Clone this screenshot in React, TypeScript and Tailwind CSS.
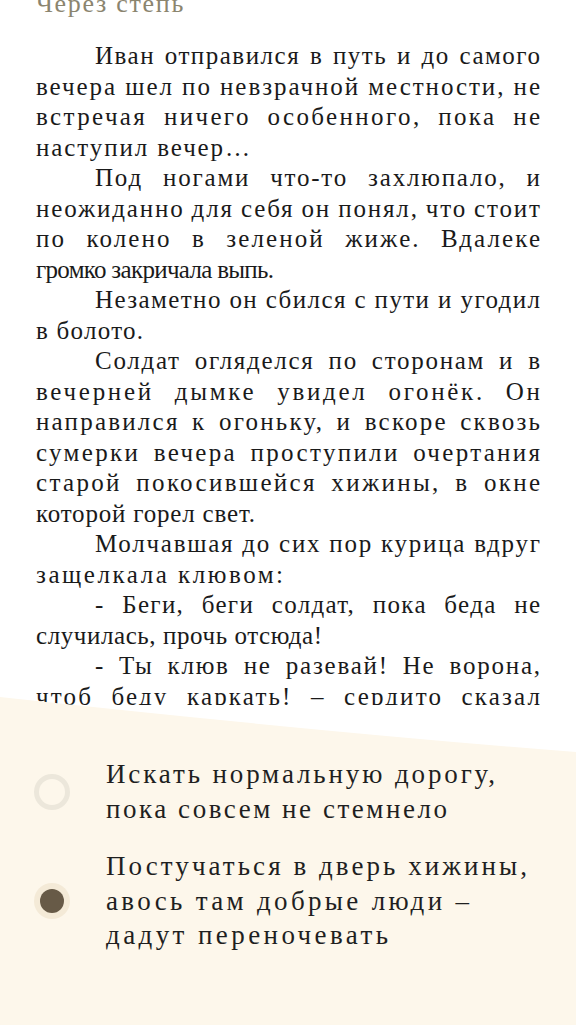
import React from 'react';

// each line of the page is laid out like the reader does it: letters and words are spread
// so the line fills its measure. w = visible width, gap = extra word spacing.
type Line = { t: string; w?: number; gap?: number };

const BODY = 25;
const CHOICE = 27;
const FULL = 504;
const INDENT = 59;

const story: Line[][] = [
  [
    { t: 'Иван отправился в путь и до самого', gap: 2 },
    { t: 'вечера шел по невзрачной местности, не', gap: 0 },
    { t: 'встречая ничего особенного, пока не', gap: 8 },
    { t: 'наступил вечер…', w: 214 },
  ],
  [
    { t: 'Под ногами что-то захлюпало, и', gap: 12 },
    { t: 'неожиданно для себя он понял, что стоит', gap: -1 },
    { t: 'по колено в зеленой жиже. Вдалеке', gap: 12 },
    { t: 'громко закричала выпь.', w: 238, gap: 0 },
  ],
  [
    { t: 'Незаметно он сбился с пути и угодил', gap: 0 },
    { t: 'в болото.', w: 107 },
  ],
  [
    { t: 'Солдат огляделся по сторонам и в', gap: 6 },
    { t: 'вечерней дымке увидел огонёк. Он', gap: 12 },
    { t: 'направился к огоньку, и вскоре сквозь', gap: 4 },
    { t: 'сумерки вечера проступили очертания', gap: 5 },
    { t: 'старой покосившейся хижины, в окне', gap: 6 },
    { t: 'которой горел свет.', w: 219 },
  ],
  [
    { t: 'Молчавшая до сих пор курица вдруг', gap: 0 },
    { t: 'защелкала клювом:', w: 247 },
  ],
  [
    { t: '- Беги, беги солдат, пока беда не', gap: 10 },
    { t: 'случилась, прочь отсюда!', w: 286 },
  ],
  [
    { t: '- Ты клюв не разевай! Не ворона,', gap: 6 },
    { t: 'чтоб беду каркать! – сердито сказал', gap: 10 },
    { t: 'солдат и постучал в дверь.', w: 300 },
  ],
];

const choices = [
  {
    id: 'road',
    selected: false,
    lines: [
      { t: 'Искать нормальную дорогу,', w: 389 },
      { t: 'пока совсем не стемнело', w: 341 },
    ],
  },
  {
    id: 'hut',
    selected: true,
    lines: [
      { t: 'Постучаться в дверь хижины,', w: 421 },
      { t: 'авось там добрые люди –', w: 363 },
      { t: 'дадут переночевать', w: 282 },
    ],
  },
];

const ctx = typeof document !== 'undefined' ? document.createElement('canvas').getContext('2d') : null;

function spread(text: string, size: number, target: number, gap = 0): React.CSSProperties {
  if (!ctx) return {};
  ctx.font = `${size}px "Liberation Serif"`;
  const natural = ctx.measureText(text).width;
  const spaces = text.split(' ').length - 1;
  const ls = (target - natural - gap * spaces) / Math.max(1, text.length - 1);
  return { letterSpacing: `${ls}px`, wordSpacing: `${gap}px` };
}

function Radio({ checked }: { checked: boolean }) {
  if (checked) {
    return (
      <span className="flex h-9 w-9 shrink-0 items-center justify-center rounded-full bg-[#f4ead7]">
        <span className="h-6 w-6 rounded-full bg-[#675a47]" />
      </span>
    );
  }
  return <span className="h-9 w-9 shrink-0 rounded-full border-[5px] border-[#ece7db]" />;
}

export default function App() {
  return (
    <div className="flex h-[1025px] w-full flex-col overflow-hidden bg-white font-['Liberation_Serif',serif]">
      <div className="h-[705px] shrink-0 overflow-hidden px-9">
        <h1 className="mt-[-11px] text-[26px] leading-[30px] tracking-[1.7px] text-[#8b856f]">Через степь</h1>
        <div className="mt-[22px] text-[25px] leading-[30.5px] text-[#1a1a1a]">
          {story.map((para, i) => (
            <p key={i}>
              {para.map((line, j) => {
                const first = j === 0;
                const target = line.w ?? (first ? FULL - INDENT : FULL);
                return (
                  <span key={j} className={'block whitespace-nowrap ' + (first ? 'pl-[59px]' : '')}>
                    <span style={spread(line.t, BODY, target, line.gap ?? 0)}>{line.t}</span>
                  </span>
                );
              })}
            </p>
          ))}
        </div>
      </div>

      <div className="relative z-10 -mt-2 flex flex-1 flex-col">
        <svg className="block h-[55px] w-full" viewBox="0 0 576 55" preserveAspectRatio="none">
          <path d="M0 0 Q320 35 576 55 L576 56 L0 56 Z" fill="#fdf7eb" />
        </svg>
        <div className="flex flex-1 flex-col gap-[23px] bg-[#fdf7eb] pt-[5px] pl-[34px]">
          {choices.map((c) => (
            <div key={c.id} className="flex items-center gap-9">
              <Radio checked={c.selected} />
              <div className="whitespace-nowrap text-[27px] leading-[34.5px] text-[#1f1f1f]">
                {c.lines.map((l, k) => (
                  <div key={k} style={spread(l.t, CHOICE, l.w)}>
                    {l.t}
                  </div>
                ))}
              </div>
            </div>
          ))}
        </div>
      </div>
    </div>
  );
}
